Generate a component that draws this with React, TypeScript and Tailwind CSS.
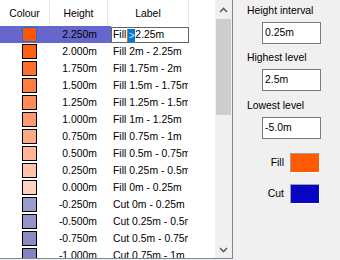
import React from "react";

const rows: { h: string; label: string; c: string }[] = [
  { h: "2.250m", label: "Fill 2.25m", c: "#ff5500" },
  { h: "2.000m", label: "Fill 2m - 2.25m", c: "#ff6012" },
  { h: "1.750m", label: "Fill 1.75m - 2m", c: "#ff6e2a" },
  { h: "1.500m", label: "Fill 1.5m - 1.75m", c: "#ff7d40" },
  { h: "1.250m", label: "Fill 1.25m - 1.5m", c: "#ff8c58" },
  { h: "1.000m", label: "Fill 1m - 1.25m", c: "#ff9a6e" },
  { h: "0.750m", label: "Fill 0.75m - 1m", c: "#ffa882" },
  { h: "0.500m", label: "Fill 0.5m - 0.75m", c: "#ffb696" },
  { h: "0.250m", label: "Fill 0.25m - 0.5m", c: "#ffc4aa" },
  { h: "0.000m", label: "Fill 0m - 0.25m", c: "#ffd2bc" },
  { h: "-0.250m", label: "Cut 0m - 0.25m", c: "#9c9ccc" },
  { h: "-0.500m", label: "Cut 0.25m - 0.5m", c: "#9494c8" },
  { h: "-0.750m", label: "Cut 0.5m - 0.75m", c: "#8c8cc4" },
  { h: "-1.000m", label: "Cut 0.75m - 1m", c: "#8484c0" },
];

function Chevron({ up }: { up: boolean }) {
  return (
    <svg width="9" height="6" viewBox="0 0 9 6">
      <polyline
        points={up ? "1,5 4.5,1.5 8,5" : "1,1 4.5,4.5 8,1"}
        fill="none"
        stroke="#606060"
        strokeWidth="1.6"
      />
    </svg>
  );
}

export default function App() {
  return (
    <div
      className="w-[340px] h-[260px] bg-[#f0f0f0] flex text-black text-[10.4px] overflow-hidden"
      style={{ fontFamily: '"Liberation Sans", Arial, sans-serif' }}
    >
      {/* List box */}
      <div className="w-[233px] h-[259px] border-r border-b border-[#828790] bg-white flex overflow-hidden shrink-0">
        <div className="w-[215px] flex flex-col overflow-hidden">
          {/* Header */}
          <div className="h-[26px] flex shrink-0">
            <div className="w-[50px] border-r border-[#e5e5e5] flex items-center justify-center pt-[1px]">Colour</div>
            <div className="w-[58px] border-r border-[#e5e5e5] flex items-center justify-center pt-[1px]">Height</div>
            <div className="w-[81px] border-r border-[#e5e5e5] flex items-center justify-center pt-[1px]">Label</div>
          </div>
          {rows.map((r, i) =>
            i === 0 ? (
              <div key={i} className="h-[17px] flex shrink-0">
                <div className="w-[111px] bg-[#6666cc] flex items-center shrink-0">
                  <div className="w-[50px] pl-[22px] flex items-center">
                    <div className="w-[15px] h-[15px] border border-[#1c6fd0]" style={{ background: r.c }} />
                  </div>
                  <div className="w-[58px] text-right pr-[11px]">{r.h}</div>
                </div>
                <div className="w-[78px] h-[16px] mt-[1px] border border-[#646464] bg-white flex items-center pl-[1px] whitespace-nowrap shrink-0">
                  <span>Fill</span>
                  <span className="w-[1px] h-[13px] bg-[#e07020] ml-[1px]" />
                  <span className="bg-[#0078d7] text-[#cfe6ff] h-[13px] leading-[13px] px-[0.5px]">&gt;</span>
                  <span>2.25m</span>
                </div>
              </div>
            ) : (
              <div key={i} className="h-[17px] flex items-center shrink-0">
                <div className="w-[50px] pl-[22px] flex items-center">
                  <div className="w-[15px] h-[15px] border border-black" style={{ background: r.c }} />
                </div>
                <div className="w-[58px] text-right pr-[11px]">{r.h}</div>
                <div className="w-[80px] pl-[5px] overflow-hidden whitespace-nowrap">{r.label}</div>
              </div>
            )
          )}
        </div>
        {/* Scrollbar */}
        <div className="w-[17px] bg-[#f0f0f0] flex flex-col shrink-0">
          <div className="h-[17px] flex items-center justify-center shrink-0 pt-[2px]">
            <Chevron up />
          </div>
          <div className="mt-[2px] h-[96px] mx-[1px] bg-[#cdcdcd] shrink-0" />
          <div className="flex-1" />
          <div className="h-[17px] flex items-center justify-center shrink-0">
            <Chevron up={false} />
          </div>
        </div>
      </div>

      {/* Right panel */}
      <div className="flex flex-col pl-[14px]">
        <div className="mt-[4px] h-[13px] leading-[13px] whitespace-nowrap">Height interval</div>
        <div className="mt-[5px] ml-[15px] w-[59px] h-[22px] border border-[#7a7a7a] bg-white flex items-center pl-[2px]">0.25m</div>
        <div className="mt-[7px] h-[13px] leading-[13px] whitespace-nowrap">Highest level</div>
        <div className="mt-[5px] ml-[15px] w-[59px] h-[22px] border border-[#7a7a7a] bg-white flex items-center pl-[2px]">2.5m</div>
        <div className="mt-[8px] h-[13px] leading-[13px] whitespace-nowrap">Lowest level</div>
        <div className="mt-[5px] ml-[15px] w-[59px] h-[22px] border border-[#7a7a7a] bg-white flex items-center pl-[2px]">-5.0m</div>
        <div className="mt-[14px] w-[73px] flex items-center justify-end gap-[6px]">
          <span>Fill</span>
          <div className="w-[30px] h-[20px] border-t border-l border-[#a0a0a0] border-r border-b border-r-white border-b-white bg-[#ff5a00]" />
        </div>
        <div className="mt-[11px] w-[73px] flex items-center justify-end gap-[6px]">
          <span>Cut</span>
          <div className="w-[30px] h-[20px] border-t border-l border-[#a0a0a0] border-r border-b border-r-white border-b-white bg-[#0606c4]" />
        </div>
      </div>
    </div>
  );
}
